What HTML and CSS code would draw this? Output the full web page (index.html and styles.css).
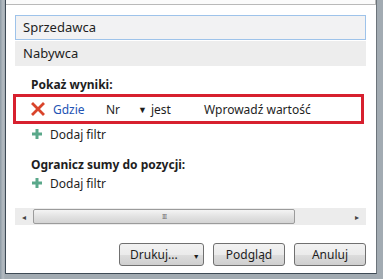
FILE: index.html
```html
<!DOCTYPE html>
<html lang="pl">
<head>
  <meta charset="UTF-8" />
  <title>Filtr wydruku</title>
  <link rel="stylesheet" href="styles.css">
</head>
<body>
  <div class="frame">
    <div class="dialog">
      <div class="top-edge"></div>

      <div class="list">
        <div class="list-item selected">Sprzedawca</div>
        <div class="list-item">Nabywca</div>
      </div>

      <div class="section-title">Pokaż wyniki:</div>
      <div class="filter-row highlight">
        <span class="remove">
          <svg width="14" height="14" viewBox="0 0 14 14">
            <path d="M2 2 L12 12 M12 2 L2 12" stroke="#d9442b" stroke-width="2.8" stroke-linecap="square"/>
          </svg>
        </span>
        <span class="where">Gdzie</span>
        <span class="field">Nr</span>
        <span class="caret">▼</span>
        <span class="op">jest</span>
        <span class="value">Wprowadź wartość</span>
      </div>
      <div class="add-filter">
        <svg width="12" height="12" viewBox="0 0 12 12">
          <path d="M6 1 V11 M1 6 H11" stroke="#5aa88a" stroke-width="3"/>
        </svg>
        <span>Dodaj filtr</span>
      </div>

      <div class="section-title second">Ogranicz sumy do pozycji:</div>
      <div class="add-filter">
        <svg width="12" height="12" viewBox="0 0 12 12">
          <path d="M6 1 V11 M1 6 H11" stroke="#5aa88a" stroke-width="3"/>
        </svg>
        <span>Dodaj filtr</span>
      </div>

      <div class="hscroll">
        <span class="arrow">◂</span>
        <div class="thumb"><span class="grip">III</span></div>
        <div class="track"></div>
        <span class="arrow">▸</span>
      </div>

      <div class="buttons">
        <button class="btn btn-split">Drukuj... <span class="btn-caret">▼</span></button>
        <button class="btn">Podgląd</button>
        <button class="btn">Anuluj</button>
      </div>
    </div>
  </div>
</body>
</html>
```

FILE: styles.css
```css
* {
  box-sizing: border-box;
}

body {
  margin: 0;
  width: 383px;
  height: 279px;
  overflow: hidden;
  font-family: "Noto Sans", "Open Sans", sans-serif;
  font-size: 12px;
  color: #1e1e1e;
}

.frame {
  width: 383px;
  height: 279px;
  padding: 0 6px 5px 5px;
  background: linear-gradient(to right, #8d9aa4, #b5bcc2 3px, #a2abb2 5px);
  background-color: #a7afb6;
}

.dialog {
  height: 274px;
  background: #fff;
  border-left: 1px solid #3e4a55;
  border-bottom: 1px solid #3e4a55;
  border-right: 1px solid #6c747b;
  padding: 0 8px 0 9px;
}

.top-edge {
  height: 5px;
  margin: 0 -8px 10px -9px;
  border-bottom: 1px solid #b9b9b9;
  border-right: 1px solid #b9b9b9;
  background: #fbfbfb;
}

.list {
  margin-right: 2px;
}

.list-item {
  height: 25px;
  line-height: 23px;
  padding-left: 7px;
  font-size: 13px;
  background: #ededed;
  border: 1px solid transparent;
}

.list-item.selected {
  background: #f2f2f3;
  border-color: #9ec3ea;
  margin-bottom: 1px;
}

.section-title {
  margin-top: 11px;
  padding-left: 16px;
  font-weight: bold;
  height: 16px;
  line-height: 16px;
}

.section-title.second {
  margin-top: 14px;
}

.filter-row {
  display: flex;
  align-items: center;
  height: 30px;
  margin: 1px 4px 0 -2px;
  border: 3px solid #d7202f;
  padding-left: 15px;
}

.remove {
  display: flex;
  width: 22px;
}

.where {
  color: #2353b4;
  width: 53px;
}

.field {
  width: 32px;
}

.caret {
  font-size: 9px;
  width: 13px;
}

.op {
  width: 53px;
}

.add-filter {
  display: flex;
  align-items: center;
  gap: 7px;
  height: 18px;
  margin-top: 1px;
  padding-left: 16px;
}

.hscroll {
  display: flex;
  align-items: center;
  height: 17px;
  margin: 16px 2px 0 0;
  background: #ececec;
  color: #444;
}

.arrow {
  width: 18px;
  text-align: center;
  font-size: 8px;
}

.thumb {
  width: 262px;
  height: 15px;
  border: 1px solid #9b9b9b;
  border-radius: 2px;
  background: linear-gradient(#f4f4f4, #e2e2e2 50%, #d4d4d4);
  display: flex;
  justify-content: center;
  align-items: center;
}

.grip {
  font-size: 7px;
  color: #777;
  letter-spacing: -1px;
}

.track {
  flex: 1;
}

.buttons {
  display: flex;
  justify-content: flex-end;
  gap: 9px;
  margin: 18px 2px 0 0;
}

.btn {
  font-family: inherit;
  font-size: 12px;
  color: #1e1e1e;
  height: 23px;
  width: 72px;
  border: 1px solid #707070;
  border-radius: 3px;
  background: linear-gradient(#f2f2f2, #ebebeb 50%, #dddddd 51%, #cfcfcf);
  padding: 0;
}

.btn-split {
  width: 85px;
  text-align: left;
  padding-left: 10px;
}

.btn-caret {
  font-size: 7px;
  margin-left: 12px;
}
```
